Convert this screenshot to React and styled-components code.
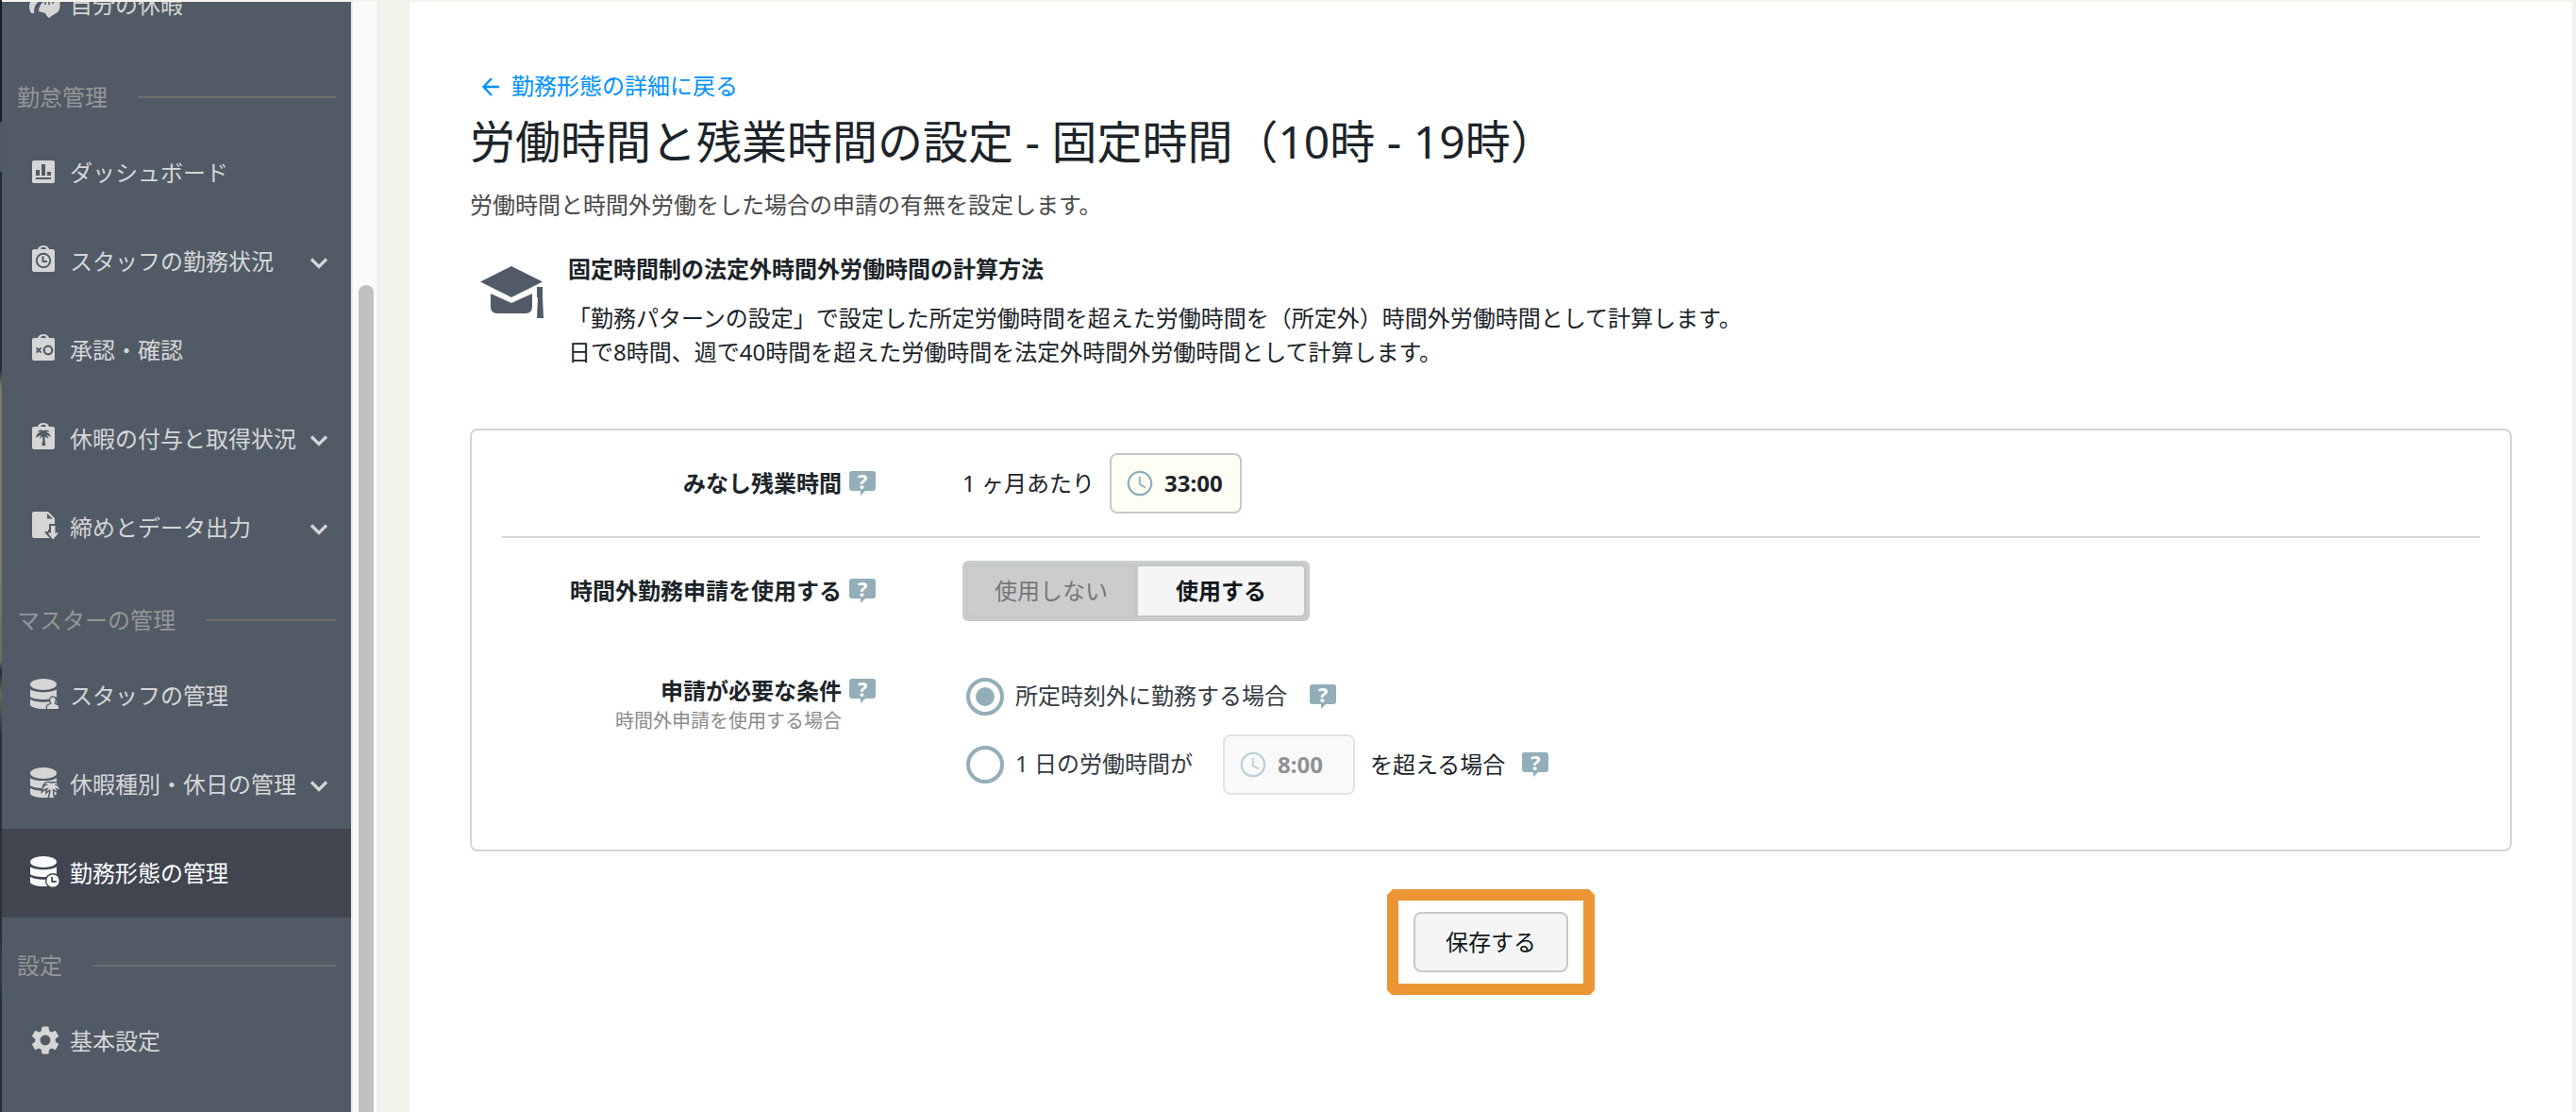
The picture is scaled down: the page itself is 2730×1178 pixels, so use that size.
import React from "react";
import styled, { createGlobalStyle, css } from "styled-components";
import { MdSettings } from "react-icons/md";

const SLATE = "#505b66";
const ACTIVE = "#40454f";

const Global = createGlobalStyle`
  * { box-sizing: border-box; }
  body {
    margin: 0;
    background: #f3f3eb;
    font-family: "Noto Sans", "Noto Sans CJK JP", sans-serif;
    font-size: 24px;
    line-height: 36px;
    color: #1c2429;
    overflow: hidden;
  }
  h1, h2, p { margin: 0; }
  button { font: inherit; color: inherit; }
`;

const Page = styled.div`
  display: flex;
  width: 2730px;
  height: 1178px;
  overflow: hidden;
  background: #f3f3eb;
`;

const Backdrop = styled.div`
  width: 2px;
  flex: none;
  background: linear-gradient(
    #10202b 0 128px, #54595c 130px 181px, #1c2b38 183px 390px,
    #7b7871 410px 600px, #6d6b66 700px, #222a33 712px, #6c6963 735px,
    #25303a 780px 990px, #3b3a3f 1030px, #1d2f3d 1060px
  );
`;

const Sidebar = styled.nav`
  display: flex;
  flex-direction: column;
  width: 370px;
  flex: none;
  height: 1176px;
  margin-top: 2px;
  background: ${SLATE};
  overflow: hidden;
`;

const Item = styled.a`
  display: flex;
  align-items: center;
  flex: none;
  height: 94px;
  padding: 0 24px 0 28px;
  color: ${(p) => (p.$active ? "#fbfbff" : "#d6d6d6")};
  --bg: ${(p) => (p.$active ? ACTIVE : SLATE)};
  background: var(--bg);
  ${(p) => p.$first && css`margin-top: -44px;`}
`;

const IconSlot = styled.span`
  display: flex;
  width: 36px;
  height: 36px;
  margin-right: 8px;
  flex: none;
`;

const ItemLabel = styled.span`
  flex: 1;
  white-space: nowrap;
`;

const Section = styled.div`
  display: flex;
  align-items: center;
  flex: none;
  height: 84px;
  padding: 18px 16px 0 16px;
  color: #969696;
  white-space: nowrap;
  &::after {
    content: "";
    flex: 1;
    height: 2px;
    margin-left: 32px;
    background: #706f6e;
  }
`;

const ScrollTrack = styled.div`
  width: 30px;
  flex: none;
  height: 1176px;
  margin-top: 2px;
  padding: 300px 4px 0 6px;
  background: #fafafa;
  border-left: 2px solid #ececec;
  border-right: 2px solid #ececec;
`;

const ScrollThumb = styled.div`
  height: 1200px;
  border-radius: 8px;
  width: 16px;
  background: #c1c1c1;
`;

const Main = styled.main`
  display: flex;
  flex-direction: column;
  width: 2292px;
  height: 1176px;
  margin: 2px 0 0 32px;
  padding: 71px 64px 0;
  background: #fff;
`;

const BackLink = styled.a`
  display: flex;
  align-items: center;
  gap: 10px;
  padding-left: 12px;
  height: 36px;
  color: #0091ff;
`;

const Title = styled.h1`
  margin-top: 5px;
  font-size: 48px;
  font-weight: 400;
  line-height: 72px;
  white-space: nowrap;
`;

const Lead = styled.p`
  margin-top: 13px;
  color: #4a4a4a;
`;

const Info = styled.section`
  display: flex;
  margin-top: 32px;
  svg { margin: 15px 25px 0 11px; flex: none; }
`;

const InfoTitle = styled.h2`
  font-size: 24px;
  font-weight: 700;
  margin-bottom: 16px;
`;

const Card = styled.section`
  display: flex;
  flex-direction: column;
  flex: none;
  height: 448px;
  margin-top: 63px;
  padding: 0 32px;
  border: 2px solid #d5d5d5;
  border-radius: 8px;
`;

const Row = styled.div`
  display: flex;
  flex: none;
  height: ${(p) => p.$h}px;
  padding-top: ${(p) => p.$top}px;
  ${(p) => p.$ruled && css`border-bottom: 2px solid #d5d5d5;`}
`;

const LabelCol = styled.div`
  display: flex;
  align-items: flex-start;
  justify-content: flex-end;
  gap: 8px;
  width: 396px;
  margin-right: 92px;
  padding-top: ${(p) => p.$top}px;
`;

const LabelText = styled.div`
  font-weight: 700;
  text-align: right;
  small {
    display: block;
    font-size: 20px;
    font-weight: 400;
    line-height: 28px;
    color: #8b8b8b;
  }
`;

const Bubble = styled.span`
  position: relative;
  display: block;
  flex: none;
  width: 28px;
  height: 21px;
  margin-top: ${(p) => p.$mt || 0}px;
  margin-bottom: ${(p) => p.$mb || 0}px;
  border-radius: 3px;
  background: #93aeb9;
  color: #fff;
  font-size: 22px;
  font-weight: 700;
  line-height: 20px;
  text-align: center;
  &::after {
    content: "";
    position: absolute;
    left: 12px;
    top: 20px;
    border-top: 6px solid #93aeb9;
    border-right: 6px solid transparent;
  }
`;

const Inline = styled.div`
  display: flex;
  align-items: center;
  height: 64px;
  white-space: nowrap;
`;

const TimeField = styled.div`
  display: flex;
  align-items: center;
  gap: 12px;
  width: 140px;
  height: 64px;
  margin: 0 16px;
  padding-left: 16px;
  border: 2px solid ${(p) => (p.$disabled ? "#dfe5e3" : "#c3cacc")};
  border-radius: 8px;
  background: ${(p) => (p.$disabled ? "#f9f9f9" : "#fefff2")};
  color: ${(p) => (p.$disabled ? "#8f9194" : "#1c2429")};
  font-weight: 700;
  svg { opacity: ${(p) => (p.$disabled ? 0.55 : 1)}; margin-bottom: 1px; }
`;

const Toggle = styled.div`
  display: flex;
  width: 368px;
  height: 64px;
  padding: 4px;
  border-radius: 6px;
  background: #ccc;
`;

const Choice = styled.button`
  width: ${(p) => p.$w}px;
  height: 56px;
  padding: 0;
  border: 2px solid #c0c8ca;
  border-radius: ${(p) => (p.$on ? "0 6px 6px 0" : "6px 0 0 6px")};
  background: ${(p) => (p.$on ? "#f5f5f5" : "#ccc")};
  color: ${(p) => (p.$on ? "#12181c" : "#747679")};
  font-weight: ${(p) => (p.$on ? 700 : 400)};
`;

const Options = styled.div`
  display: flex;
  flex-direction: column;
`;

const Option = styled.div`
  display: flex;
  align-items: center;
  height: ${(p) => p.$h}px;
  padding-left: 4px;
  white-space: nowrap;
`;

const OptionLabel = styled.span`
  color: #343b42;
  margin: 0 ${(p) => p.$gap}px 2px 12px;
`;

const Suffix = styled.span`
  margin-right: 18px;
`;

const Radio = styled.span`
  display: flex;
  align-items: center;
  justify-content: center;
  width: 40px;
  height: 40px;
  border: 4px solid #93aeb9;
  border-radius: 50%;
  &::after {
    content: "";
    width: 20px;
    height: 20px;
    border-radius: 50%;
    background: ${(p) => (p.$on ? "#93aeb9" : "transparent")};
  }
`;

const Highlight = styled.div`
  display: flex;
  align-items: center;
  justify-content: center;
  align-self: center;
  width: 220px;
  height: 112px;
  margin-top: 40px;
  border: 12px solid #eb9534;
  clip-path: polygon(6px 0, calc(100% - 6px) 0, 100% 6px, 100% calc(100% - 5px), calc(100% - 5px) 100%, 5px 100%, 0 calc(100% - 5px), 0 6px);
`;

const SaveButton = styled.button`
  width: 164px;
  height: 64px;
  padding: 0;
  border: 2px solid #c3cacc;
  border-radius: 8px;
  background: #f5f5f5;
  color: #12181c;
`;

const ChevronSvg = styled.svg`
  margin-top: 3px;
  flex: none;
`;

const GearIcon = styled(MdSettings)`
  margin-top: -1px;
  flex: none;
`;

/* Sidebar icons share one 36px canvas; --bg is the row colour seen through cut-outs. */
const Glyph = ({ children }) => (
  <svg width="36" height="36" viewBox="0 0 36 36" fill="currentColor">{children}</svg>
);

const HeartHand = () => (
  <Glyph>
    <path d="M1 20c0-5 3-9 8-8l1 4c-3 2-4 6-4 11H3c-1-2-2-4-2-7z" />
    <path d="M16 15l17-3c1 5 1 11-2 14-3 2-7 4-9 6-2-1-3-3-4-5l-7-2c0-4 2-8 5-10z" />
    <path d="M18 12v6M22 12v6M26 12v5" stroke="var(--bg)" strokeWidth="1.6" fill="none" />
  </Glyph>
);

const ChartIcon = () => (
  <Glyph>
    <rect x="4" y="5" width="24" height="24" rx="2" />
    <path d="M8 15h4v6H8zM14 9h4v12h-4zM20 17h4v4h-4zM8 23h16v2H8z" fill="var(--bg)" />
  </Glyph>
);

const Clipboard = ({ children }) => (
  <Glyph>
    <path d="M6 5h4c0.6-2.4 3-4 6-4s5.4 1.6 6 4h4a2 2 0 0 1 2 2v20a2 2 0 0 1-2 2H6a2 2 0 0 1-2-2V7a2 2 0 0 1 2-2z" />
    <path d="M13 5c0.5-1.5 1.5-2.3 3-2.3S18.5 3.5 19 5z" fill="var(--bg)" />
    {children}
  </Glyph>
);

const ClockBoard = () => (
  <Clipboard>
    <g fill="none" stroke="var(--bg)" strokeWidth="2">
      <circle cx="16" cy="17" r="7.2" />
      <path d="M15.500 12.500v5.500h4.500" />
    </g>
  </Clipboard>
);

const ApproveBoard = () => (
  <Clipboard>
    <g fill="none" stroke="var(--bg)">
      <circle cx="21" cy="18" r="4.300" strokeWidth="2.200" />
      <path d="M8.500 15.500l5 5M13.500 15.500l-5 5" strokeWidth="1.800" />
    </g>
  </Clipboard>
);

const Palm = (props) => (
  <path
    d="M8.200 0.500C6.500-1 3.500-0.800 2 1.600c1.500-.3 2.700-.3 3.700.2C3 2 0.600 4 .2 8c1.500-1.600 3.600-2.500 6-2.800C5 6 4.300 7.200 4.200 9c1-1.200 2.200-2 3.300-2.400.3 3.200-.4 6.400-1.200 9.400h4.400c-.7-3-1.200-6.200-1-9.600 1.500.4 2.800 1.300 3.900 2.600-.2-1.900-1-3.100-2.300-3.900 1.900.2 3.500.9 4.700 2.300C15.700 4 13.700 2.200 11 2c1-.5 2.300-.5 3.800-.2C13.300-.6 10-1 8.200.5z"
    {...props}
  />
);

const PalmBoard = () => (
  <Clipboard>
    <Palm transform="translate(7.800 9)" fill="var(--bg)" />
  </Clipboard>
);

const ExportIcon = () => (
  <Glyph>
    <path d="M6 1h15l7 7v12h-7v4h-3l5 5H6a2 2 0 0 1-2-2V3a2 2 0 0 1 2-2z" />
    <path d="M20 3v5.500h6z" fill="var(--bg)" />
    <path d="M22 14h9v8h5l-9 11-10-11h5z" fill="var(--bg)" />
    <path d="M24 16h4.500v7.500h3.500l-5.800 7-5.700-7h3.500z" />
  </Glyph>
);

const Database = ({ children }) => (
  <Glyph>
    <ellipse cx="16" cy="6" rx="14" ry="6" />
    <path d="M2 11.200c5 3.900 23 3.900 28 0V19c-4 4-24 4-28 0z" />
    <path d="M2 21.800c5 3.900 23 3.900 28 0V28c-4 5.300-24 5.300-28 0z" />
    {children}
  </Glyph>
);

const StaffDb = () => (
  <Database>
    <path
      d="M20 33v-3.500c0-1.500 3-2 4.300-2.800v-1.200c-1.800-2.500-1-6 1.700-6s3.500 3.500 1.700 6v1.200c1.300.8 4.300 1.300 4.300 2.800V33z"
      stroke="var(--bg)"
      strokeWidth="2.600"
      paintOrder="stroke"
    />
    <path d="M18 32h16v4H18z" fill="var(--bg)" />
  </Database>
);

const PalmDb = () => (
  <Database>
    <Palm transform="translate(15 16.500) scale(1.120 0.980)" stroke="var(--bg)" strokeWidth="2.600" paintOrder="stroke" />
    <path d="M18 32h16v4H18z" fill="var(--bg)" />
  </Database>
);

const ClockDb = () => (
  <Database>
    <circle cx="26" cy="26" r="8" fill="var(--bg)" />
    <circle cx="26" cy="26" r="6.600" />
    <path d="M25.200 22v4.800h4.600" fill="none" stroke="var(--bg)" strokeWidth="1.800" />
  </Database>
);

const Gear = () => <GearIcon size={36} />;

const Chevron = () => (
  <ChevronSvg width="20" height="14" viewBox="0 0 20 14">
    <path d="M2 2.500l8 8 8-8" fill="none" stroke="currentColor" strokeWidth="3.200" />
  </ChevronSvg>
);

const Arrow = () => (
  <svg width="22" height="22" viewBox="0 0 22 22" fill="none" stroke="currentColor" strokeWidth="2.400">
    <path d="M19 12H3M11 3l-8.500 9 8.500 9" />
  </svg>
);

const Cap = () => (
  <svg width="68" height="58" viewBox="0 0 68 58" fill={SLATE}>
    <path d="M33 0l33 16.500L33 33 0 16.500z" />
    <path d="M11 29l22 10 22-10v14q0 7-7 7H18q-7 0-7-7z" />
    <path d="M60 22h6v11l1 22h-7l1-22h-1z" />
  </svg>
);

const Clock = () => (
  <svg width="28" height="28" viewBox="0 0 28 28" fill="none" stroke="#8bafbf">
    <circle cx="14" cy="14" r="12.200" strokeWidth="2.200" />
    <path d="M13.800 7v8l6 3.500" strokeWidth="1.800" />
  </svg>
);

const Help = ({ mt, mb }) => <Bubble $mt={mt} $mb={mb}>?</Bubble>;

const NavItem = ({ icon: Icon, children, more, ...rest }) => (
  <Item {...rest}>
    <IconSlot><Icon /></IconSlot>
    <ItemLabel>{children}</ItemLabel>
    {more && <Chevron />}
  </Item>
);

export default function App() {
  return (
    <>
      <Global />
      <Page>
        <Backdrop />
        <Sidebar>
          <NavItem icon={HeartHand} $first>自分の休暇</NavItem>
          <Section>勤怠管理</Section>
          <NavItem icon={ChartIcon}>ダッシュボード</NavItem>
          <NavItem icon={ClockBoard} more>スタッフの勤務状況</NavItem>
          <NavItem icon={ApproveBoard}>承認・確認</NavItem>
          <NavItem icon={PalmBoard} more>休暇の付与と取得状況</NavItem>
          <NavItem icon={ExportIcon} more>締めとデータ出力</NavItem>
          <Section>マスターの管理</Section>
          <NavItem icon={StaffDb}>スタッフの管理</NavItem>
          <NavItem icon={PalmDb} more>休暇種別・休日の管理</NavItem>
          <NavItem icon={ClockDb} $active>勤務形態の管理</NavItem>
          <Section>設定</Section>
          <NavItem icon={Gear}>基本設定</NavItem>
        </Sidebar>
        <ScrollTrack><ScrollThumb /></ScrollTrack>
        <Main>
          <BackLink><Arrow />勤務形態の詳細に戻る</BackLink>
          <Title>労働時間と残業時間の設定 - 固定時間（10時 - 19時）</Title>
          <Lead>労働時間と時間外労働をした場合の申請の有無を設定します。</Lead>
          <Info>
            <Cap />
            <div>
              <InfoTitle>固定時間制の法定外時間外労働時間の計算方法</InfoTitle>
              <p>「勤務パターンの設定」で設定した所定労働時間を超えた労働時間を（所定外）時間外労働時間として計算します。</p>
              <p>日で8時間、週で40時間を超えた労働時間を法定外時間外労働時間として計算します。</p>
            </div>
          </Info>
          <Card>
            <Row $h={114} $top={24} $ruled>
              <LabelCol $top={14}>
                <LabelText>みなし残業時間</LabelText>
                <Help mt={5} />
              </LabelCol>
              <Inline>
                1 ヶ月あたり
                <TimeField><Clock />33:00</TimeField>
              </Inline>
            </Row>
            <Row $h={130} $top={24}>
              <LabelCol $top={14}>
                <LabelText>時間外勤務申請を使用する</LabelText>
                <Help mt={5} />
              </LabelCol>
              <Toggle>
                <Choice $w={180}>使用しない</Choice>
                <Choice $w={180} $on>使用する</Choice>
              </Toggle>
            </Row>
            <Row $h={180} $top={14}>
              <LabelCol $top={0}>
                <LabelText>申請が必要な条件<small>時間外申請を使用する場合</small></LabelText>
                <Help mt={5} />
              </LabelCol>
              <Options>
                <Option $h={48}>
                  <Radio $on />
                  <OptionLabel $gap={24}>所定時刻外に勤務する場合</OptionLabel>
                  <Help mb={6} />
                </Option>
                <Option $h={96}>
                  <Radio />
                  <OptionLabel $gap={16}>1 日の労働時間が</OptionLabel>
                  <TimeField $disabled><Clock />8:00</TimeField>
                  <Suffix>を超える場合</Suffix>
                  <Help mb={6} />
                </Option>
              </Options>
            </Row>
          </Card>
          <Highlight><SaveButton>保存する</SaveButton></Highlight>
        </Main>
      </Page>
    </>
  );
}
